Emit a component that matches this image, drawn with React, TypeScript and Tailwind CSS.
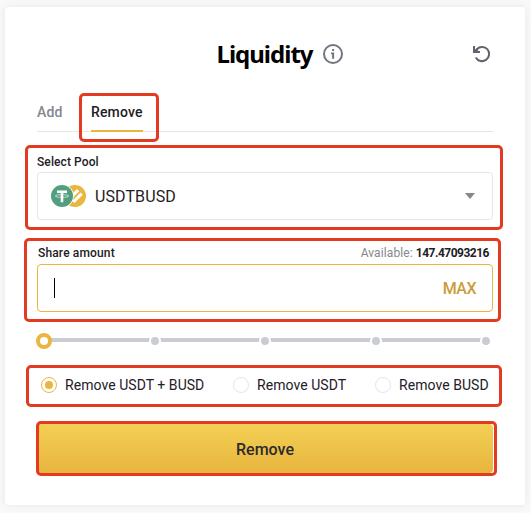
import React, { useState } from "react";

const options = [
  { id: "both", label: "Remove USDT + BUSD", className: "w-[192px]" },
  { id: "usdt", label: "Remove USDT", className: "w-[142px]" },
  { id: "busd", label: "Remove BUSD", className: "" },
];

const steps = [0, 25, 50, 75, 100];

// Red frame drawn over the part of the form that is being pointed out
const Highlight = ({ className }: { className: string }) => (
  <span
    className={`pointer-events-none absolute rounded-[5px] border-3 border-[#e33b22] ${className}`}
  />
);

const InfoIcon = () => (
  <svg width="20" height="20" viewBox="0 0 20 20" fill="none" className="shrink-0">
    <circle cx="10" cy="10" r="9" stroke="#707580" strokeWidth="2" />
    <rect x="9.1" y="5" width="2" height="2" fill="#707580" />
    <path d="M8 8.6h3.1v6.1H9.1v-4.4H8z" fill="#707580" />
  </svg>
);

const ResetIcon = () => (
  <svg width="20" height="18" viewBox="0 0 20 18" fill="none">
    <path d="M3.8 12.4A7.1 7.1 0 1 0 5 4L2.4 7" stroke="#606570" strokeWidth="2" />
    <path d="M1 1h2v4l2-1.6 1.5 1.5L5.4 6H8v2H1z" fill="#606570" />
  </svg>
);

const PoolIcon = () => (
  <svg width="36" height="24" viewBox="0 0 36 24" className="shrink-0">
    <circle cx="24" cy="12" r="11" fill="#eab63f" />
    <g fill="#fff">
      <path d="M26 5l2.2 2.2-7.6 7.6-2.2-2.2z" />
      <path d="M29.6 8.6l2.2 2.2-8.3 8.3-2.2-2.2z" />
    </g>
    <circle cx="11" cy="12" r="11.8" fill="#fff" />
    <circle cx="11" cy="12" r="11" fill="#529f80" />
    <path d="M6 6.4h10v2.5h-3.7v9.3H9.7V8.9H6z" fill="#fff" />
    <ellipse cx="11" cy="12" rx="6.8" ry="1.4" fill="none" stroke="#fff" strokeWidth="0.6" />
  </svg>
);

const App = () => {
  const [selected, setSelected] = useState("both");

  return (
    <div className="h-[513px] w-[531px] overflow-hidden bg-[#f9f9f9] pt-[7px] pl-[5px] font-['Roboto','Liberation_Sans',sans-serif] text-[#1e2026]">
      <div className="h-[498px] w-[520px] rounded-[4px] bg-white px-8 pt-8 shadow-[0_0_8px_rgba(0,0,0,0.08)]">
        <header className="grid h-[30px] grid-cols-[1fr_auto_1fr] items-center">
          <span />
          <div className="flex items-center gap-[10px] pl-[29px]">
            <h1 className="w-[96px] font-['Noto_Sans',sans-serif] text-[24px] leading-[30px] font-bold tracking-[-1px] whitespace-nowrap text-black">
              Liquidity
            </h1>
            <InfoIcon />
          </div>
          <button className="mr-[1px] justify-self-end">
            <ResetIcon />
          </button>
        </header>

        <nav className="mt-[27px] flex h-[36px] gap-[29px] border-b border-[#e6e6e6] text-[14px] leading-[20px] font-medium">
          <button className="h-[36px] w-[25px] pt-[6px] pb-[10px] text-left tracking-[0.2px] text-[#85868e]">
            Add
          </button>
          <button className="relative h-[36px] w-[52px] border-b-2 border-[#eab63f] pt-[6px] pb-[8px] text-left tracking-[0.15px]">
            Remove
            <Highlight className="-top-[3px] -right-4 -bottom-[12px] -left-3" />
          </button>
        </nav>

        <section className="relative mt-[22px]">
          <label className="block h-[18px] text-[12px] leading-[16px] font-medium tracking-[0.1px]">
            Select Pool
          </label>
          <div className="flex h-12 items-center rounded-[4px] border border-[#e6e6e6] pr-[17px] pl-[13px]">
            <PoolIcon />
            <span className="ml-2 flex-1 pt-px text-[16px] tracking-[0.1px]">USDTBUSD</span>
            <svg width="10" height="6" viewBox="0 0 10 6">
              <path d="M0 0h10L5 6z" fill="#85868e" />
            </svg>
          </div>
          <Highlight className="-top-[9px] -right-[10px] -bottom-[10px] -left-3" />
        </section>

        <section className="relative mt-[23px]">
          <div className="flex h-[21px] items-start justify-between pr-[4px] pl-[1px] text-[12px] leading-[20px]">
            <label className="font-medium tracking-[0.15px]">Share amount</label>
            <span className="tracking-[0.1px] text-[#85868e]">
              Available:{" "}
              <span className="font-bold tracking-[-0.5px] text-[#1e2026]">147.47093216</span>
            </span>
          </div>
          <div className="flex h-12 items-center justify-between rounded-[4px] border border-[#eab63f] pr-4 pl-4">
            <span className="h-5 w-px bg-black" />
            <button className="pt-px text-[16px] font-medium tracking-[-0.5px] text-[#c99c37]">MAX</button>
          </div>
          <Highlight className="-top-[5px] -right-[8px] -bottom-[10px] -left-[13px]" />
        </section>

        <div className="mt-[21px] -ml-px grid h-4 w-[456px] items-center">
          <div className="col-start-1 row-start-1 mr-1 mb-[2px] ml-2 h-1 bg-[#c9ccd2]" />
          <div className="z-10 col-start-1 row-start-1 flex items-center justify-between">
            {steps.map((step) =>
              step === 0 ? (
                <span
                  key={step}
                  className="-mr-[2px] h-4 w-4 rounded-full border-4 border-[#eab63f] bg-white"
                />
              ) : (
                <span key={step} className="flex h-3 w-3 items-center justify-center rounded-full bg-white">
                  <span className="h-2 w-2 rounded-full bg-[#c9ccd2]" />
                </span>
              )
            )}
          </div>
        </div>

        <div className="relative mt-[24px] ml-1 flex h-6 items-center text-[14px] tracking-[0.05px]">
          {options.map(({ id, label, className }) => (
            <button
              key={id}
              onClick={() => setSelected(id)}
              className={`flex shrink-0 items-center gap-2 whitespace-nowrap ${className}`}
            >
              <span
                className={`flex h-4 w-4 items-center justify-center rounded-full border ${
                  selected === id ? "border-[#eab63f]" : "border-[#e6e6e6]"
                }`}
              >
                {selected === id && <span className="h-2 w-2 rounded-full bg-[#eab63f]" />}
              </span>
              {label}
            </button>
          ))}
          <Highlight className="-top-[8px] -right-[9px] -bottom-[10px] -left-[15px]" />
        </div>

        <button className="relative mt-[27px] block h-[49px] w-full rounded-[4px] bg-linear-to-b from-[#f3d053] to-[#e8b53f] pt-[2px] text-[16px] font-medium text-[#2b2b2e]">
          Remove
          <Highlight className="-top-[3px] -right-[4px] -bottom-[3px] -left-[1px]" />
        </button>
      </div>
    </div>
  );
};

export default App;
